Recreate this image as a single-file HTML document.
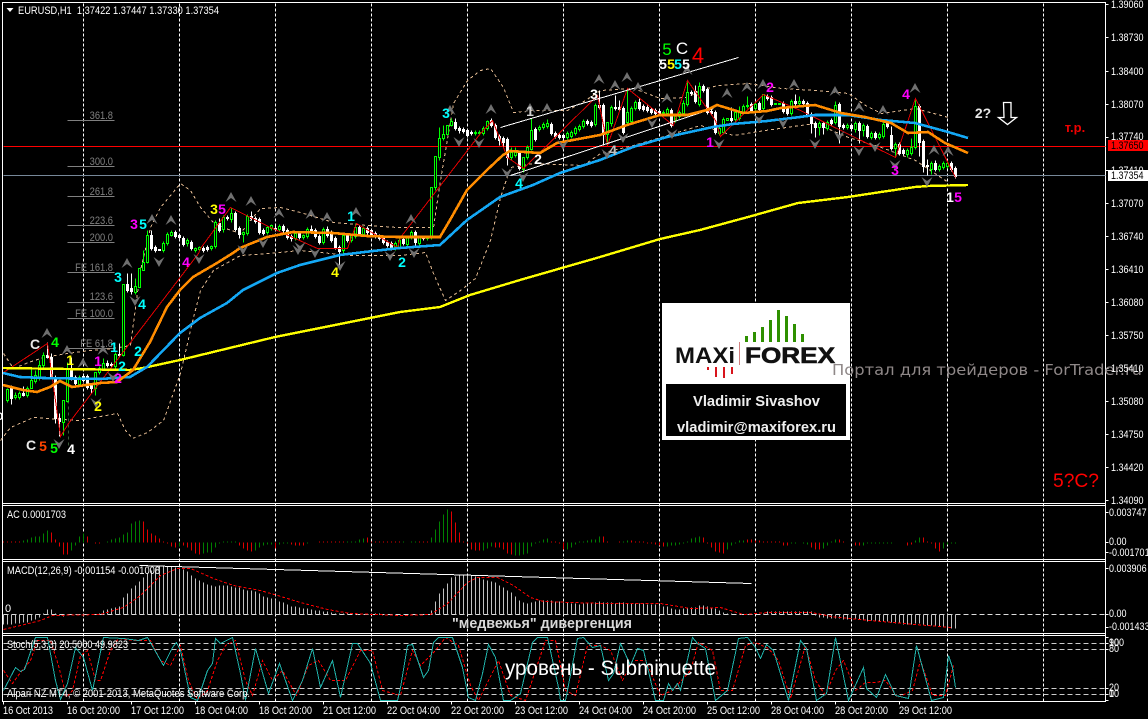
<!DOCTYPE html>
<html><head><meta charset="utf-8"><title>EURUSD H1</title>
<style>
html,body{margin:0;padding:0;background:#000;width:1148px;height:719px;overflow:hidden}
svg{display:block}
text{font-family:"Liberation Sans",sans-serif}
.a{font-size:11px;fill:#fff}
.f{font-size:11px;fill:#808080;text-anchor:end}
.w{font-size:14px;text-anchor:middle;font-weight:bold}
</style></head><body>
<svg width="1148" height="719" viewBox="0 0 1148 719" xmlns="http://www.w3.org/2000/svg">
<rect width="1148" height="719" fill="#000"/>
<g transform="translate(.5 .5)" shape-rendering="crispEdges" fill="none">
<!-- grid -->
<path d="M83 3V701M179 3V701M275 3V701M371 3V701M467 3V701M563 3V701M659 3V701M755 3V701M851 3V701M947 3V701M1043 3V701" stroke="#fff" stroke-dasharray="3 2"/>
<!-- frames -->
<path d="M2 2H1105V701H2ZM2 503H1105M2 505H1105M2 559H1105M2 561H1105M2 633H1105M2 635H1105" stroke="#fff"/>
<!-- ticks -->
<path d="M1105 4h3M1105 37h3M1105 71h3M1105 104h3M1105 137h3M1105 170h3M1105 203h3M1105 236h3M1105 269h3M1105 302h3M1105 335h3M1105 368h3M1105 401h3M1105 434h3M1105 467h3M1105 500h3M1105 512h3M1105 542h3M1105 552h3M1105 568h3M1105 614h3M1105 627h3M1105 637h3M1105 643h3M1105 649h3M1105 688h3M1105 694h3M1105 700h3M3 701v3M67 701v3M131 701v3M195 701v3M259 701v3M323 701v3M387 701v3M451 701v3M515 701v3M579 701v3M643 701v3M707 701v3M771 701v3M835 701v3M899 701v3" stroke="#fff"/>
<!-- fib lines -->
<path d="M67 120H114M67 166H114M67 196H114M67 225H114M67 242H114M67 272H114M67 302H114M67 318H114M67 348H114" stroke="#808080"/>
<!-- horizontal -->
<path d="M3 146H1105" stroke="#f00"/>
<path d="M3 175H1105" stroke="#778899"/>
<!-- bollinger -->
<path d="M3 353L13 368L28 362L43 357L67 353L90 350L113 348L130 345L140 270L150 227L160 207L170 195L180 183L190 190L200 207L213 222L225 228L240 233L250 220L260 208L280 207L300 212L333 222L367 225L397 227L433 227L440 180L453 103L467 80L480 70L490 68L503 87L513 112L533 110L567 110L585 100L600 90L633 88L660 98L687 97L700 90L717 85L748 83L781 88L815 90L848 93L865 105L881 113L915 108L948 117" stroke="#e0b890" stroke-dasharray="3 3"/>
<path d="M0 440L10 427L33 417L77 420L117 413L125 430L132 438L147 432L163 420L180 373L193 317L200 290L213 270L240 255L267 253L300 250L350 255L400 255L425 252L433 273L445 300L460 290L475 278L490 240L500 197L510 167L533 163L583 165L600 153L633 145L667 135L700 125L733 135L765 130L800 125L815 123L848 137L881 147L915 160L948 182" stroke="#e0b890" stroke-dasharray="3 3"/>
<path d="M68 400V447" stroke="#3a5a3a" stroke-dasharray="3 3"/>
<!-- wicks -->
<path stroke="#0f0" d="M7 388V402M15 392V399M19 391V399M27 386V397M31 367V388M35 370V383M39 360V380M43 352V367M63 400V435M67 362V402M79 375V386M95 372V395M99 366V374M103 358V370M115 352V368M123 284V356M135 278V294M143 250V270M147 230V263M163 241V252M167 232V245M171 230V236M187 238V246M195 247V252M199 246V251M211 245V250M215 220V248M223 215V232M231 207V222M243 231V242M247 214V235M267 226V234M271 224V230M279 224V231M295 231V240M303 234V239M307 227V238M323 227V244M343 233V255M351 233V242M355 223V238M363 226V236M395 241V250M399 238V249M407 236V246M411 230V239M419 235V245M427 235V240M431 187V239M435 156V190M439 127V160M443 125V140M451 118V126M475 130V135M479 130V135M483 126V135M487 120V130M511 147V160M515 147V157M523 157V172M527 145V159M531 118V150M539 125V131M543 122V129M547 119V128M567 131V139M571 130V138M575 126V135M579 124V131M583 119V128M595 103V126M607 122V145M611 105V126M627 88V124M631 106V123M635 100V110M663 110V115M667 107V115M675 114V122M679 110V118M683 100V115M687 80V106M699 82V106M719 126V135M723 117V134M735 110V121M739 106V120M743 104V114M747 96V108M755 102V110M763 94V110M791 99V115M799 96V105M819 121V135M827 120V130M835 101V124M847 123V129M855 121V132M863 123V136M871 131V139M879 132V139M883 122V138M895 142V157M907 148V157M911 138V155M915 98V149M931 161V174M939 164V171M943 161V169M947 161V168"/>
<path stroke="#fff" d="M11 385V404M23 386V396M47 342V358M51 353V378M55 375V423M59 413V436M71 357V380M75 375V386M83 373V382M87 374V389M91 383V393M107 360V367M111 362V367M119 343V356M127 273V292M131 273V294M151 230V250M155 245V252M175 230V238M179 233V239M183 236V246M191 240V250M203 246V252M207 245V251M219 218V232M227 215V220M235 211V231M239 226V238M251 211V220M255 216V223M259 217V234M263 228V235M275 226V231M283 224V232M287 228V239M291 234V241M299 231V239M311 225V233M315 228V238M319 234V244M327 226V237M331 230V242M335 236V249M339 245V265M347 233V242M359 225V235M367 226V234M371 228V237M375 231V238M379 234V240M383 235V244M387 240V247M391 241V250M403 237V245M415 230V245M423 235V240M455 118V130M459 126V133M463 127V133M467 128V137M471 130V135M491 118V127M495 123V139M499 134V145M503 136V147M507 137V165M519 151V170M535 127V141M551 122V135M555 131V138M559 133V139M563 133V139M587 119V125M591 120V127M599 90V109M603 103V145M615 95V110M619 100V111M623 106V134M639 98V110M643 104V111M647 105V112M651 107V114M655 108V115M659 109V115M671 108V127M691 90V95M695 85V103M703 84V92M707 87V114M711 109V115M715 110V134M731 107V122M751 102V112M759 101V111M767 94V100M771 95V106M783 101V113M787 106V115M795 94V105M803 99V105M807 101V117M811 112V133M815 121V137M823 121V134M831 118V125M839 102V143M843 123V129M851 123V130M859 121V143M867 124V138M875 131V139M887 121V128M891 126V150M899 142V155M903 148V155M919 104V156M923 139V172M927 159V175M935 160V171M951 161V171M955 166V178"/>
<!-- green bodies -->
<path stroke="#0f0" fill="#000" d="M6 389h2v11h-2zM14 395h2v2h-2zM18 393h2v4h-2zM26 388h2v7h-2zM30 380h2v8h-2zM34 375h2v6h-2zM38 365h2v13h-2zM42 355h2v10h-2zM62 400h2v22h-2zM66 369h2v32h-2zM78 377h2v7h-2zM94 372h2v16h-2zM98 368h2v4h-2zM102 363h2v6h-2zM114 354h2v12h-2zM122 284h2v71h-2zM134 286h2v6h-2zM138 268h2v19h-2zM142 262h2v8h-2zM146 235h2v27h-2zM162 243h2v7h-2zM166 234h2v9h-2zM170 232h2v3h-2zM186 240h2v3h-2zM194 248h2v2h-2zM198 247h2v2h-2zM210 246h2v2h-2zM214 222h2v24h-2zM222 217h2v12h-2zM230 213h2v6h-2zM242 232h2v2h-2zM246 216h2v17h-2zM266 227h2v5h-2zM270 225h2v3h-2zM278 226h2v3h-2zM294 233h2v5h-2zM302 235h2v2h-2zM306 229h2v7h-2zM322 229h2v13h-2zM342 235h2v15h-2zM350 235h2v5h-2zM354 227h2v9h-2zM362 228h2v6h-2zM394 243h2v5h-2zM398 240h2v7h-2zM406 237h2v7h-2zM410 232h2v5h-2zM418 237h2v6h-2zM426 236h2v2h-2zM430 187h2v50h-2zM434 156h2v31h-2zM438 138h2v19h-2zM442 134h2v4h-2zM446 125h2v9h-2zM450 121h2v4h-2zM474 132h2v1h-2zM478 132h2v1h-2zM482 128h2v5h-2zM486 121h2v7h-2zM510 152h2v5h-2zM514 152h2v3h-2zM522 157h2v12h-2zM526 147h2v10h-2zM530 130h2v19h-2zM538 127h2v2h-2zM542 124h2v3h-2zM546 123h2v3h-2zM566 133h2v4h-2zM570 132h2v4h-2zM574 128h2v5h-2zM578 126h2v3h-2zM582 121h2v5h-2zM594 105h2v19h-2zM606 122h2v12h-2zM610 107h2v16h-2zM626 112h2v10h-2zM630 108h2v13h-2zM634 102h2v6h-2zM662 112h2v1h-2zM666 109h2v4h-2zM674 116h2v4h-2zM678 112h2v4h-2zM682 103h2v10h-2zM686 92h2v12h-2zM698 86h2v18h-2zM718 128h2v5h-2zM722 119h2v13h-2zM726 118h2v2h-2zM734 112h2v7h-2zM738 112h2v6h-2zM742 106h2v6h-2zM746 105h2v1h-2zM754 104h2v4h-2zM762 94h2v14h-2zM774 103h2v1h-2zM778 103h2v1h-2zM790 101h2v12h-2zM798 101h2v2h-2zM818 123h2v4h-2zM826 122h2v6h-2zM834 105h2v17h-2zM846 125h2v2h-2zM854 123h2v6h-2zM862 125h2v5h-2zM870 133h2v4h-2zM878 134h2v3h-2zM882 124h2v12h-2zM894 144h2v4h-2zM906 150h2v4h-2zM910 147h2v6h-2zM914 106h2v41h-2zM930 163h2v6h-2zM938 166h2v3h-2zM942 163h2v4h-2zM946 163h2v3h-2z"/>
<!-- white bodies -->
<path stroke="#fff" fill="#fff" d="M10 388h2v10h-2zM22 393h2v2h-2zM46 355h2v2h-2zM50 357h2v20h-2zM54 377h2v41h-2zM58 418h2v3h-2zM70 369h2v9h-2zM74 377h2v6h-2zM82 376h2v4h-2zM86 376h2v11h-2zM90 385h2v3h-2zM106 363h2v2h-2zM110 364h2v1h-2zM118 354h2v1h-2zM126 284h2v6h-2zM130 288h2v3h-2zM150 235h2v13h-2zM154 247h2v3h-2zM158 249h2v1h-2zM174 232h2v4h-2zM178 235h2v2h-2zM182 238h2v6h-2zM190 242h2v6h-2zM202 248h2v2h-2zM206 247h2v2h-2zM218 223h2v7h-2zM226 217h2v1h-2zM234 213h2v16h-2zM238 228h2v6h-2zM250 216h2v2h-2zM254 218h2v3h-2zM258 219h2v13h-2zM262 230h2v3h-2zM274 228h2v1h-2zM282 226h2v4h-2zM286 230h2v7h-2zM290 236h2v2h-2zM298 233h2v4h-2zM310 229h2v2h-2zM314 230h2v6h-2zM318 236h2v6h-2zM326 229h2v6h-2zM330 232h2v8h-2zM334 238h2v9h-2zM338 247h2v4h-2zM346 235h2v5h-2zM358 227h2v6h-2zM366 228h2v4h-2zM370 230h2v5h-2zM374 233h2v3h-2zM378 236h2v2h-2zM382 237h2v5h-2zM386 242h2v3h-2zM390 243h2v5h-2zM402 239h2v4h-2zM414 232h2v10h-2zM422 237h2v1h-2zM454 122h2v6h-2zM458 128h2v2h-2zM462 129h2v2h-2zM466 130h2v5h-2zM470 132h2v1h-2zM490 120h2v5h-2zM494 125h2v12h-2zM498 136h2v4h-2zM502 138h2v4h-2zM506 139h2v18h-2zM518 153h2v15h-2zM534 129h2v10h-2zM550 124h2v9h-2zM554 133h2v3h-2zM558 135h2v2h-2zM562 135h2v2h-2zM586 121h2v2h-2zM590 122h2v3h-2zM598 105h2v2h-2zM602 105h2v29h-2zM614 107h2v1h-2zM618 107h2v2h-2zM622 108h2v24h-2zM638 102h2v6h-2zM642 106h2v3h-2zM646 107h2v3h-2zM650 109h2v3h-2zM654 110h2v3h-2zM658 111h2v2h-2zM670 110h2v15h-2zM690 92h2v1h-2zM694 91h2v10h-2zM702 86h2v4h-2zM706 89h2v23h-2zM710 111h2v2h-2zM714 112h2v20h-2zM730 118h2v2h-2zM750 104h2v6h-2zM758 103h2v6h-2zM766 96h2v2h-2zM770 97h2v7h-2zM782 103h2v8h-2zM786 108h2v5h-2zM794 101h2v2h-2zM802 101h2v2h-2zM806 103h2v12h-2zM810 114h2v9h-2zM814 123h2v4h-2zM822 123h2v4h-2zM830 120h2v3h-2zM838 104h2v22h-2zM842 125h2v2h-2zM850 125h2v3h-2zM858 123h2v7h-2zM866 126h2v10h-2zM874 133h2v4h-2zM886 123h2v3h-2zM890 135h2v13h-2zM898 144h2v9h-2zM902 150h2v3h-2zM918 106h2v36h-2zM922 141h2v25h-2zM926 165h2v1h-2zM934 163h2v6h-2zM950 163h2v6h-2zM954 168h2v8h-2z"/>
<!-- zigzag -->
<path stroke="#e00000" d="M3 372L47 343L60 436L68 423L198 253L200 248L230 207L270 227L317 248L347 248L356 223L397 247L400 237L480 133L492 120L507 157L523 168L597 95L607 145L627 88L673 125L687 80L715 120L720 136L763 94L800 110L895 157L915 98L955 177"/>
<!-- channel -->
<path stroke="#fff" d="M500 127L738 57M510 175L713 108"/>
</g>
<!-- moving averages -->
<g fill="none" shape-rendering="crispEdges">
<path stroke="#ffff00" stroke-width="2.4" d="M3 368L130 370L143 368L180 360L275 337L400 312L440 307L470 295L520 280L600 257L660 239L700 230L748 217L798 203L848 197L881 192L915 187L928 186L968 185"/>
<path stroke="#14a8f5" stroke-width="2.6" d="M3 373L20 377L43 378L100 379L130 377L147 367L180 333L200 318L227 303L243 290L277 273L300 265L340 255L373 251L400 248L440 245L467 220L500 197L533 185L560 173L600 160L633 147L667 137L713 127L733 124L767 121L800 117L815 115L848 115L881 120L915 123L948 132L968 138"/>
<path stroke="#ff8c00" stroke-width="2.6" d="M3 385L23 390L37 392L50 387L60 381L72 387L100 383L117 382L133 370L150 342L167 307L180 290L193 277L217 263L233 253L240 248L267 237L293 232L333 233L367 236L397 237L440 237L450 220L467 190L487 170L503 155L510 151L540 153L557 143L600 135L627 125L660 115L687 115L707 110L717 105L727 108L743 113L767 111L781 108L815 105L841 113L865 117L891 123L908 133L928 132L945 143L968 153"/>
</g>
<!-- fractals -->
<path fill="#707070" d="M152 214l5.5 10-5.5-4-5.5 4zM171 215l5.5 10-5.5-4-5.5 4zM231 192l5.5 10-5.5-4-5.5 4zM251 196l5.5 10-5.5-4-5.5 4zM279 208l5.5 10-5.5-4-5.5 4zM311 209l5.5 10-5.5-4-5.5 4zM327 212l5.5 10-5.5-4-5.5 4zM356 207l5.5 10-5.5-4-5.5 4zM47 328l5.5 10-5.5-4-5.5 4zM67 345l5.5 10-5.5-4-5.5 4zM83 358l5.5 10-5.5-4-5.5 4zM103 345l5.5 10-5.5-4-5.5 4zM127 258l5.5 10-5.5-4-5.5 4zM411 214l5.5 10-5.5-4-5.5 4zM450 105l5.5 10-5.5-4-5.5 4zM491 104l5.5 10-5.5-4-5.5 4zM530 103l5.5 10-5.5-4-5.5 4zM547 103l5.5 10-5.5-4-5.5 4zM599 74l5.5 10-5.5-4-5.5 4zM615 80l5.5 10-5.5-4-5.5 4zM627 72l5.5 10-5.5-4-5.5 4zM638 82l5.5 10-5.5-4-5.5 4zM667 93l5.5 10-5.5-4-5.5 4zM687 65l5.5 10-5.5-4-5.5 4zM727 88l5.5 10-5.5-4-5.5 4zM747 82l5.5 10-5.5-4-5.5 4zM763 79l5.5 10-5.5-4-5.5 4zM794 79l5.5 10-5.5-4-5.5 4zM835 86l5.5 10-5.5-4-5.5 4zM859 102l5.5 10-5.5-4-5.5 4zM883 105l5.5 10-5.5-4-5.5 4zM915 83l5.5 10-5.5-4-5.5 4zM934 145l5.5 10-5.5-4-5.5 4zM948 146l5.5 10-5.5-4-5.5 4z
M263 248l5.5-10-5.5 4-5.5-4zM300 252l5.5-10-5.5 4-5.5-4zM315 258l5.5-10-5.5 4-5.5-4zM59 449l5.5-10-5.5 4-5.5-4zM96 408l5.5-10-5.5 4-5.5-4zM135 306l5.5-10-5.5 4-5.5-4zM159 267l5.5-10-5.5 4-5.5-4zM199 264l5.5-10-5.5 4-5.5-4zM243 255l5.5-10-5.5 4-5.5-4zM298 255l5.5-10-5.5 4-5.5-4zM340 271l5.5-10-5.5 4-5.5-4zM390 261l5.5-10-5.5 4-5.5-4zM113 382l5.5-10-5.5 4-5.5-4zM414 258l5.5-10-5.5 4-5.5-4zM459 147l5.5-10-5.5 4-5.5-4zM479 148l5.5-10-5.5 4-5.5-4zM507 178l5.5-10-5.5 4-5.5-4zM523 182l5.5-10-5.5 4-5.5-4zM563 150l5.5-10-5.5 4-5.5-4zM607 159l5.5-10-5.5 4-5.5-4zM623 143l5.5-10-5.5 4-5.5-4zM652 128l5.5-10-5.5 4-5.5-4zM672 139l5.5-10-5.5 4-5.5-4zM719 149l5.5-10-5.5 4-5.5-4zM759 124l5.5-10-5.5 4-5.5-4zM783 128l5.5-10-5.5 4-5.5-4zM815 149l5.5-10-5.5 4-5.5-4zM839 141l5.5-10-5.5 4-5.5-4zM859 156l5.5-10-5.5 4-5.5-4zM875 152l5.5-10-5.5 4-5.5-4zM895 170l5.5-10-5.5 4-5.5-4zM927 187l5.5-10-5.5 4-5.5-4z"/>
<!-- header -->
<path d="M6.5 8h7l-3.5 4z" fill="#fff"/>
<text class="a" x="18" y="14" xml:space="preserve" textLength="201" lengthAdjust="spacingAndGlyphs">EURUSD,H1  1.37422 1.37447 1.37330 1.37354</text>
<!-- fib labels -->
<g transform="translate(113 0) scale(.85 1)"><text class="f" x="0" y="119">361.8</text><text class="f" x="0" y="165">300.0</text><text class="f" x="0" y="195">261.8</text><text class="f" x="0" y="224">223.6</text><text class="f" x="0" y="241">200.0</text><text class="f" x="0" y="271">FE 161.8</text><text class="f" x="0" y="300">123.6</text><text class="f" x="0" y="317">FE 100.0</text><text class="f" x="0" y="347">FE 61.8</text></g>
<!-- wave labels -->
<g>
<text class="w" fill="#ff00ff" x="134" y="229">3</text><text class="w" fill="#00ffff" x="143" y="229">5</text>
<text class="w" fill="#ffff00" x="214" y="214">3</text><text class="w" fill="#ff00ff" x="222" y="214">5</text>
<text class="w" fill="#00ffff" x="351" y="221">1</text>
<text class="w" fill="#e8e8e8" x="35" y="349">C</text><text class="w" fill="#00ff00" x="55" y="347">4</text>
<text class="w" fill="#e8e8e8" x="31" y="450">C</text><text class="w" fill="#ff4500" x="43" y="451">5</text><text class="w" fill="#00ff00" x="54" y="453">5</text><text class="w" fill="#fff" x="71" y="454">4</text>
<text class="w" fill="#ffff00" x="70" y="365">1</text><text class="w" fill="#ff00ff" x="98" y="366">1</text><text class="w" fill="#00ffff" x="114" y="352">1</text>
<text class="w" fill="#00ffff" x="122" y="371">2</text><text class="w" fill="#00ffff" x="138" y="356">2</text><text class="w" fill="#ff00ff" x="118" y="383">2</text><text class="w" fill="#ffff00" x="98" y="411">2</text>
<text class="w" fill="#00ffff" x="118" y="282">3</text><text class="w" fill="#00ffff" x="142" y="309">4</text><text class="w" fill="#ff00ff" x="186" y="267">4</text><text class="w" fill="#ffff00" x="335" y="277">4</text>
<text class="w" fill="#00ffff" x="402" y="267">2</text><text class="w" fill="#00ffff" x="446" y="118">3</text><text class="w" fill="#d0d0d0" x="530" y="116">1</text><text class="w" fill="#fff" x="594" y="99">3</text><text class="w" fill="#fff" x="538" y="164">2</text><text class="w" fill="#00ffff" x="519" y="188">4</text><text class="w" fill="#c0c0c0" x="613" y="155">4</text>
<text class="w" fill="#00ff00" x="667" y="55" style="font-size:17px;font-weight:normal">5</text><text class="w" fill="#fff" x="682" y="54" style="font-size:17px;font-weight:normal">C</text><text class="w" fill="#ff0000" x="698" y="63" style="font-size:22px;font-weight:normal">4</text>
<text class="w" fill="#fff" x="663" y="69">5</text><text class="w" fill="#ffff00" x="671" y="69">5</text><text class="w" fill="#00ffff" x="678" y="69">5</text><text class="w" fill="#fff" x="686" y="69">5</text>
<text class="w" fill="#ff00ff" x="710" y="147">1</text><text class="w" fill="#ff00ff" x="770" y="92">2</text><text class="w" fill="#ff00ff" x="906" y="99">4</text><text class="w" fill="#ff00ff" x="895" y="175">3</text><text class="w" fill="#fff" x="950" y="202">1</text><text class="w" fill="#ff00ff" x="958" y="202">5</text>
<text class="w" fill="#e8e8e8" x="983" y="118">2?</text>
<text class="w" fill="#f00000" x="1075" y="132" style="font-size:13px">т.р.</text>
<text x="-3" y="420" font-size="11" font-weight="bold" fill="#fff">0</text>
</g>
<path d="M1003.5 102.5h7.5v15h5.5l-9 7-9-7h5.5z" fill="none" stroke="#fff" stroke-width="1.3"/>
<!-- logo -->
<rect x="662" y="303" width="188" height="137" fill="#fff"/>
<rect x="666" y="384" width="180" height="52" fill="#000"/>
<g fill="#2e9000"><rect x="745" y="336" width="3" height="6"/><rect x="753" y="332" width="3" height="10"/><rect x="761" y="327" width="3" height="15"/><rect x="769" y="320" width="3" height="22"/><rect x="777" y="310" width="3" height="32"/><rect x="785" y="316" width="3" height="26"/><rect x="793" y="324" width="3" height="18"/><rect x="801" y="334" width="3" height="8"/></g>
<g fill="#d8141c"><rect x="707" y="367" width="2" height="3"/><rect x="715" y="367" width="2" height="10"/><rect x="723" y="367" width="2" height="11"/><rect x="731" y="367" width="2" height="7"/></g>
<rect x="739" y="342" width="1" height="23" fill="#d08080"/>
<text x="675" y="363" font-size="22" font-weight="bold" fill="#111" textLength="60" lengthAdjust="spacingAndGlyphs">MAXi</text>
<text x="745" y="363" font-size="22" font-weight="bold" fill="#111" stroke="#111" stroke-width=".6" textLength="90" lengthAdjust="spacingAndGlyphs">FOREX</text>
<text x="693" y="406" font-size="15" font-weight="bold" fill="#eee" textLength="127" lengthAdjust="spacingAndGlyphs">Vladimir Sivashov</text>
<text x="677" y="432" font-size="15" font-weight="bold" fill="#eee" textLength="159" lengthAdjust="spacingAndGlyphs">vladimir@maxiforex.ru</text>
<!-- watermark -->
<text x="832" y="375" fill="#8f8888" style="font-family:'DejaVu Sans',sans-serif;font-size:15.5px" textLength="310" lengthAdjust="spacingAndGlyphs">Портал для трейдеров - ForTrader.ru</text>
<text x="1053" y="487" fill="#f00" font-size="19" textLength="46" lengthAdjust="spacingAndGlyphs">5?C?</text>
<!-- price axis -->
<g transform="translate(1111 0) scale(.82 1)">
<text class="a" x="0" y="8">1.39060</text><text class="a" x="0" y="41">1.38730</text><text class="a" x="0" y="75">1.38400</text><text class="a" x="0" y="108">1.38070</text><text class="a" x="0" y="140">1.37740</text><text class="a" x="0" y="174">1.37410</text><text class="a" x="0" y="207">1.37070</text><text class="a" x="0" y="240">1.36740</text><text class="a" x="0" y="273">1.36410</text><text class="a" x="0" y="306">1.36080</text><text class="a" x="0" y="339">1.35750</text><text class="a" x="0" y="372">1.35410</text><text class="a" x="0" y="405">1.35080</text><text class="a" x="0" y="438">1.34750</text><text class="a" x="0" y="471">1.34420</text><text class="a" x="0" y="504">1.34090</text>
</g>
<g transform="translate(1109 0) scale(.82 1)">
<text class="a" x="0" y="516">0.003747</text><text class="a" x="0" y="545">0.00</text><text class="a" x="0" y="556">-0.001701</text>
<text class="a" x="0" y="572">0.003906</text><text class="a" x="0" y="617">0.00</text><text class="a" x="0" y="630">-0.001433</text>
<text class="a" x="0" y="646">100</text><text class="a" x="0" y="646">90</text><text class="a" x="0" y="652">80</text><text class="a" x="0" y="691">20</text><text class="a" x="0" y="697">10</text><text class="a" x="0" y="697">0</text>
</g>
<rect x="1108" y="140" width="40" height="11" fill="#f00"/>
<rect x="1108" y="170" width="40" height="11" fill="#fff"/>
<g transform="translate(1111 0) scale(.82 1)"><text x="0" y="149" font-size="11" fill="#000">1.37650</text><text x="0" y="179" font-size="11" fill="#000">1.37354</text></g>
<!-- AC -->
<g transform="translate(.5 .5)" shape-rendering="crispEdges" fill="none">
<path stroke="#e00000" d="M3 542v-1M7 542v-1M11 542v-1M15 542v-1M19 542v-1M51 542v-10M55 542v-3M59 542v4M63 542v12M67 542v12M87 542v-6M95 542v1M99 542v1M143 542v-21M147 542v-13M151 542v-9M155 542v-7M159 542v-4M163 542v-1M167 542v1M171 542v4M175 542v5M183 542v3M187 542v5M191 542v8M195 542v11M199 542v12M239 542v3M243 542v6M247 542v8M251 542v9M275 542v6M291 542v2M295 542v3M299 542v3M303 542v3M319 542v-1M323 542v-1M327 542v-1M331 542v-1M335 542v-1M339 542v-1M343 542v-1M367 542v-5M371 542v-1M375 542v-1M379 542v-1M383 542v-1M387 542v-1M391 542v-1M395 542v-1M399 542v-1M419 542v-1M423 542v-1M427 542v-1M451 542v-31M455 542v-20M459 542v-10M463 542v-1M467 542v1M471 542v7M475 542v8M479 542v8M495 542v5M499 542v5M503 542v7M507 542v11M511 542v12M551 542v-1M555 542v-1M559 542v1M563 542v7M603 542v-6M607 542v-1M619 542v-1M631 542v-2M635 542v-1M639 542v-1M643 542v-1M647 542v1M651 542v1M655 542v2M659 542v3M663 542v4M703 542v-5M707 542v1M711 542v5M715 542v9M719 542v10M723 542v11M747 542v-3M751 542v-3M755 542v-2M759 542v-2M763 542v-1M767 542v-1M771 542v-1M775 542v-1M779 542v-1M783 542v3M787 542v3M811 542v5M815 542v7M819 542v7M839 542v-3M843 542v-1M855 542v3M859 542v3M907 542v3M911 542v2M923 542v-5M927 542v-1M931 542v1M935 542v6M939 542v9"/>
<path stroke="#008000" d="M23 542v-2M27 542v-3M31 542v-5M35 542v-6M39 542v-6M43 542v-9M47 542v-12M71 542v8M75 542v3M79 542v-6M83 542v-9M107 542v-1M111 542v-3M115 542v-4M119 542v-5M123 542v-8M127 542v-10M131 542v-19M135 542v-21M139 542v-22M179 542v4M203 542v11M207 542v10M211 542v10M215 542v5M219 542v1M223 542v-1M227 542v-1M231 542v-1M235 542v-1M255 542v8M259 542v5M263 542v3M267 542v2M271 542v2M279 542v2M283 542v1M287 542v1M307 542v1M347 542v-1M351 542v-1M355 542v-1M359 542v-3M363 542v-4M403 542v-1M411 542v-1M415 542v-1M431 542v-5M435 542v-13M439 542v-21M443 542v-28M447 542v-33M483 542v8M487 542v6M491 542v4M515 542v13M519 542v13M523 542v12M527 542v11M531 542v4M535 542v1M539 542v-1M543 542v-3M547 542v-4M567 542v7M571 542v5M575 542v2M579 542v-1M583 542v-1M587 542v-2M591 542v-3M595 542v-3M599 542v-6M623 542v-1M627 542v-2M667 542v4M671 542v3M675 542v3M679 542v2M683 542v1M687 542v-1M691 542v-4M695 542v-5M699 542v-6M727 542v7M731 542v3M735 542v1M739 542v-2M743 542v-2M791 542v1M795 542v1M803 542v1M807 542v2M823 542v6M827 542v3M831 542v-1M835 542v-3M863 542v3M867 542v1M871 542v1M875 542v1M879 542v1M883 542v1M887 542v1M891 542v1M915 542v-2M919 542v-5M943 542v6M947 542v2M951 542v1M955 542v1"/>
<!-- MACD levels -->
<path stroke="#ddd" stroke-dasharray="5 3" d="M3 614H1105"/>
<path stroke="#c0c0c0" d="M3 614v10M7 614v10M11 614v10M15 614v9M19 614v9M23 614v8M27 614v8M31 614v6M35 614v5M39 614v3M43 614v-1M47 614v-5M51 614v-5M55 614v-1M59 614v1M63 614v2M67 614v1M99 614v-1M103 614v-4M107 614v-5M111 614v-6M115 614v-7M119 614v-8M123 614v-17M127 614v-21M131 614v-26M135 614v-29M139 614v-33M143 614v-37M147 614v-41M151 614v-44M155 614v-46M159 614v-48M163 614v-48M167 614v-48M171 614v-48M175 614v-47M179 614v-47M183 614v-45M187 614v-43M191 614v-39M195 614v-36M199 614v-34M203 614v-32M207 614v-30M211 614v-29M215 614v-28M219 614v-29M223 614v-29M227 614v-29M231 614v-28M235 614v-27M239 614v-27M243 614v-25M247 614v-24M251 614v-24M255 614v-23M259 614v-21M263 614v-18M267 614v-17M271 614v-16M275 614v-15M279 614v-13M283 614v-12M287 614v-10M291 614v-8M295 614v-8M299 614v-7M303 614v-6M307 614v-6M311 614v-5M315 614v-4M319 614v-4M323 614v-3M327 614v-3M331 614v-2M335 614v-1M339 614v-1M343 614v-1M347 614v-1M367 614v-1M371 614v-1M375 614v-1M379 614v-1M431 614v-4M435 614v-13M439 614v-21M443 614v-26M447 614v-31M451 614v-37M455 614v-38M459 614v-39M463 614v-39M467 614v-39M471 614v-39M475 614v-38M479 614v-37M483 614v-35M487 614v-34M491 614v-33M495 614v-32M499 614v-29M503 614v-27M507 614v-24M511 614v-22M515 614v-18M519 614v-14M523 614v-12M527 614v-11M531 614v-12M535 614v-13M539 614v-14M543 614v-14M547 614v-14M551 614v-14M555 614v-13M559 614v-13M563 614v-12M567 614v-12M571 614v-11M575 614v-11M579 614v-10M583 614v-11M587 614v-11M591 614v-12M595 614v-12M599 614v-13M603 614v-12M607 614v-12M611 614v-12M615 614v-11M619 614v-12M623 614v-12M627 614v-11M631 614v-11M635 614v-11M639 614v-11M643 614v-11M647 614v-10M651 614v-10M655 614v-10M659 614v-9M663 614v-8M667 614v-8M671 614v-6M675 614v-5M679 614v-5M683 614v-6M687 614v-7M691 614v-7M695 614v-7M699 614v-9M703 614v-9M707 614v-8M711 614v-7M715 614v-6M719 614v-4M723 614v-2M727 614v-1M731 614v-1M763 614v-1M767 614v-3M771 614v-3M775 614v-3M779 614v-3M783 614v-3M787 614v-3M791 614v-3M795 614v-3M799 614v-3M803 614v-3M807 614v-3M811 614v-3M815 614v1M819 614v3M823 614v3M827 614v4M831 614v4M835 614v4M839 614v4M843 614v5M847 614v5M851 614v5M855 614v5M859 614v5M863 614v6M867 614v7M871 614v6M875 614v7M879 614v7M883 614v7M887 614v7M891 614v8M895 614v9M899 614v9M903 614v10M907 614v10M911 614v10M915 614v9M919 614v9M923 614v10M927 614v11M931 614v11M935 614v12M939 614v12M943 614v13M947 614v14M951 614v14M955 614v14"/>
<path stroke="#f00" stroke-dasharray="3 2" d="M3 629L20 625L40 620L52 615L100 614L123 607L140 595L160 575L177 568L190 568L213 578L233 585L260 590L277 595L300 602L327 609L350 613L400 615L430 614L447 603L467 582L477 577L497 577L513 585L530 597L543 601L600 603L660 603L690 608L720 607L743 614L768 612L811 612L831 616L848 618L881 621L915 624L951 627"/>
<path stroke="#fff" d="M139 565L751 583"/>
<!-- stoch levels -->
<path stroke="#ccc" stroke-dasharray="5 3" d="M3 643H1105M3 649H1105M3 688H1105M3 694H1105"/>
<path stroke="#f00" stroke-dasharray="3 2" d="M3 670L12 683L20 672L30 660L37 640L50 640L58 665L66 697L72 690L80 655L87 650L95 680L100 680L110 650L118 638L135 640L150 640L160 660L170 665L180 645L188 680L197 699L207 690L217 660L225 645L235 640L245 680L252 695L262 660L272 680L282 670L296 695L308 665L318 660L330 680L345 680L360 650L372 650L382 690L400 695L412 650L420 665L435 650L445 637L458 645L470 685L478 700L488 680L498 660L510 695L525 700L535 670L545 640L555 640L565 690L575 695L587 645L600 645L610 650L622 680L632 660L645 660L660 695L672 690L690 670L698 642L712 650L720 690L732 690L745 645L755 642L768 648L778 660L790 698L805 645L815 680L825 695L835 670L843 660L855 690L865 682L875 682L885 680L897 697L912 690L920 660L932 695L945 695L953 665"/>
<path stroke="#20b2aa" d="M3 690L15 667L20 671L24 669L35 637L47 637L55 680L60 699L67 683L75 647L83 657L92 690L103 637L123 638L138 640L147 637L163 665L172 647L176 642L180 650L190 697L197 700L207 670L212 663L215 638L220 643L232 637L240 673L245 700L255 648L268 693L279 663L292 700L302 680L312 648L320 687L332 660L340 697L352 643L357 643L370 663L380 700L397 700L400 687L407 645L412 644L423 677L428 670L433 642L438 637L452 637L462 667L468 697L475 700L482 673L488 644L495 657L503 700L510 700L520 693L532 642L537 637L547 637L558 687L560 700L565 700L577 638L583 637L592 647L600 645L608 680L613 673L620 643L630 665L637 648L643 650L655 700L663 700L668 683L672 690L677 683L680 690L692 637L697 643L705 648L715 700L727 690L738 638L747 637L755 647L760 658L766 644L773 650L788 700L800 640L806 648L816 700L826 693L835 637L848 700L863 667L866 688L876 697L885 674L895 695L908 698L916 645L931 700L943 697L948 655L952 667L955 687"/>
</g>
<!-- indicator labels -->
<text class="a" x="7" y="518" textLength="59" lengthAdjust="spacingAndGlyphs">AC 0.0001703</text>
<text class="a" x="7" y="574" textLength="153" lengthAdjust="spacingAndGlyphs">MACD(12,26,9) -0.001154 -0.001008</text>
<text class="a" x="5" y="612">0</text>
<text class="a" x="7" y="648" textLength="121" lengthAdjust="spacingAndGlyphs">Stoch(5,3,3) 20.5000 49.9823</text>
<text class="a" x="7" y="697" textLength="243" lengthAdjust="spacingAndGlyphs">Alpari NZ MT4, © 2001-2013, MetaQuotes Software Corp.</text>
<text x="452" y="628" font-size="15" font-weight="bold" fill="#d8d8d8" textLength="180" lengthAdjust="spacingAndGlyphs">"медвежья" дивергенция</text>
<text x="505" y="675" font-size="21" fill="#fff" textLength="211" lengthAdjust="spacingAndGlyphs">уровень - Subminuette</text>
<!-- dates -->
<g>
<text class="a" x="3" y="714" textLength="50" lengthAdjust="spacingAndGlyphs">16 Oct 2013</text><text class="a" x="67" y="714" textLength="53" lengthAdjust="spacingAndGlyphs">16 Oct 20:00</text><text class="a" x="131" y="714" textLength="53" lengthAdjust="spacingAndGlyphs">17 Oct 12:00</text><text class="a" x="195" y="714" textLength="53" lengthAdjust="spacingAndGlyphs">18 Oct 04:00</text><text class="a" x="259" y="714" textLength="53" lengthAdjust="spacingAndGlyphs">18 Oct 20:00</text><text class="a" x="323" y="714" textLength="53" lengthAdjust="spacingAndGlyphs">21 Oct 12:00</text><text class="a" x="387" y="714" textLength="53" lengthAdjust="spacingAndGlyphs">22 Oct 04:00</text><text class="a" x="451" y="714" textLength="53" lengthAdjust="spacingAndGlyphs">22 Oct 20:00</text><text class="a" x="515" y="714" textLength="53" lengthAdjust="spacingAndGlyphs">23 Oct 12:00</text><text class="a" x="579" y="714" textLength="53" lengthAdjust="spacingAndGlyphs">24 Oct 04:00</text><text class="a" x="643" y="714" textLength="53" lengthAdjust="spacingAndGlyphs">24 Oct 20:00</text><text class="a" x="707" y="714" textLength="53" lengthAdjust="spacingAndGlyphs">25 Oct 12:00</text><text class="a" x="771" y="714" textLength="53" lengthAdjust="spacingAndGlyphs">28 Oct 04:00</text><text class="a" x="835" y="714" textLength="53" lengthAdjust="spacingAndGlyphs">28 Oct 20:00</text><text class="a" x="899" y="714" textLength="53" lengthAdjust="spacingAndGlyphs">29 Oct 12:00</text>
</g>
</svg>
</body></html>
